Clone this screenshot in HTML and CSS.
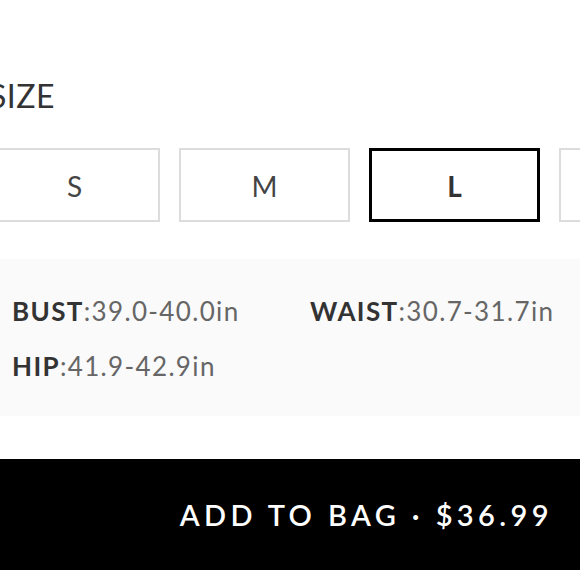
FILE: index.html
```html
<!DOCTYPE html>
<html>
<head>
<meta charset="utf-8">
<link rel="stylesheet" href="styles.css">
</head>
<body>
<div class="page">
  <div class="label">SIZE</div>
  <div class="sizes">
    <div class="size">S</div>
    <div class="size">M</div>
    <div class="size selected">L</div>
    <div class="size">XL</div>
  </div>
  <div class="measures">
    <div class="m"><b>BUST</b>:39.0-40.0in</div>
    <div class="m"><b>WAIST</b>:30.7-31.7in</div>
    <div class="m"><b>HIP</b>:41.9-42.9in</div>
  </div>
  <div class="bag">
    <span class="bag-text">ADD TO BAG · $36.99</span>
  </div>
</div>
</body>
</html>
```
FILE: styles.css
```css
html, body {
  margin: 0;
  padding: 0;
  background: #fff;
  overflow: hidden;
}
body {
  width: 580px;
  height: 579px;
  font-family: Lato, "Noto Sans", sans-serif;
  color: #333;
}
.page {
  margin-left: -11px;
  width: 760px;
  padding-top: 76px;
}
.label {
  font-size: 32px;
  line-height: 40px;
  color: #333;
  letter-spacing: 0.5px;
}
.sizes {
  display: flex;
  gap: 19px;
  margin-top: 32px;
}
.size {
  box-sizing: border-box;
  width: 171px;
  height: 74px;
  border: 2px solid #dcdcdc;
  display: flex;
  align-items: center;
  justify-content: center;
  font-size: 28px;
  color: #444;
  padding-top: 2px;
}
.size.selected {
  border: 3px solid #000;
  font-weight: 700;
  color: #333;
}
.measures {
  margin-top: 37px;
  width: 760px;
  height: 157px;
  box-sizing: border-box;
  background: #fafafa;
  padding: 34px 0 0 23px;
  display: grid;
  grid-template-columns: 298px 1fr;
  row-gap: 19px;
  align-content: start;
}
.m {
  font-size: 26px;
  line-height: 36px;
  color: #666;
  white-space: nowrap;
  letter-spacing: 1.35px;
}
.m b {
  color: #333;
  font-weight: 700;
}
.bag {
  margin-top: 43px;
  height: 111px;
  width: 591px;
  background: #000;
  display: flex;
  align-items: center;
  justify-content: flex-end;
  box-sizing: border-box;
  padding-right: 27px;
}
.bag-text {
  color: #fff;
  font-size: 29px;
  font-weight: 600;
  letter-spacing: 4.4px;
}
```
